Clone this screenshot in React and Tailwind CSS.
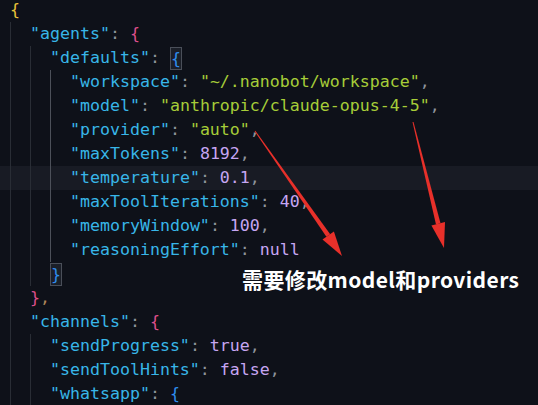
import React from "react";

const K = "text-[#38b6e8]";
const S = "text-[#a6cd38]";
const N = "text-[#c6a6f2]";
const P = "text-[#8f949c]";
const Y = "text-[#e9c23a]";
const PK = "text-[#de4f8c]";
const BL = "text-[#2f8ef0]";
const TAN = "text-[#b0865a]";

// each line: indent level, tokens [text, colour, matched bracket]
const LINES = [
  { ind: 0, t: [["{", Y]] },
  { ind: 1, t: [['"agents"', K], [": ", P], ["{", PK]] },
  { ind: 2, t: [['"defaults"', K], [": ", P], ["{", BL, true]] },
  { ind: 3, t: [['"workspace"', K], [": ", P], ['"~/.nanobot/workspace"', S], [",", P]] },
  { ind: 3, t: [['"model"', K], [": ", P], ['"anthropic/claude-opus-4-5"', S], [",", P]] },
  { ind: 3, t: [['"provider"', K], [": ", P], ['"auto"', S], [",", P]] },
  { ind: 3, t: [['"maxTokens"', K], [": ", P], ["8192", N], [",", P]] },
  { ind: 3, cur: true, t: [['"temperature"', K], [": ", P], ["0.1", N], [",", P]] },
  { ind: 3, t: [['"maxToolIterations"', K], [": ", P], ["40", N], [",", P]] },
  { ind: 3, t: [['"memoryWindow"', K], [": ", P], ["100", N], [",", P]] },
  { ind: 3, t: [['"reasoningEffort"', K], [": ", P], ["null", N]] },
  { ind: 2, t: [["}", BL, true]] },
  { ind: 1, t: [["}", PK], [",", TAN]] },
  { ind: 1, t: [['"channels"', K], [": ", P], ["{", PK]] },
  { ind: 2, t: [['"sendProgress"', K], [": ", P], ["true", N], [",", P]] },
  { ind: 2, t: [['"sendToolHints"', K], [": ", P], ["false", N], [",", P]] },
  { ind: 2, t: [['"whatsapp"', K], [": ", P], ["{", BL]] },
];

const Guide = ({ active }) => (
  <span
    className={`inline-block w-[20px] h-6 shrink-0 border-l ${
      active ? "border-[#4c5059]" : "border-[#292d35]"
    }`}
  />
);

const Line = ({ line }) => (
  <div
    className={`flex items-center h-6 pl-[10px] whitespace-pre ${
      line.cur ? "bg-[#181b24]" : ""
    }`}
  >
    {Array.from({ length: line.ind }).map((_, i) => (
      <Guide key={i} active={i === 2} />
    ))}
    {line.t.map(([text, color, boxed], i) =>
      boxed ? (
        <span
          key={i}
          className={`${color} inline-block h-[23px] leading-[21px] border border-[#4a4f59] bg-[#1b1f28]`}
        >
          {text}
        </span>
      ) : (
        <span key={i} className={color}>
          {text}
        </span>
      )
    )}
  </div>
);

const Arrows = () => (
  <svg
    className="absolute inset-0 pointer-events-none"
    width="538"
    height="405"
    viewBox="0 0 538 405"
  >
    <g fill="#e8302a">
      <polygon points="254.6,131.3 255.4,130.7 330.2,234.3 326.4,236.8" />
      <polygon points="342,256 322.5,239.4 333.9,231.4" />
      <polygon points="412.5,122.1 413.5,121.9 440.5,223.2 436,224.4" />
      <polygon points="444,248 431.4,225.4 445,222" />
    </g>
  </svg>
);

export default function App() {
  return (
    <div className="relative w-[538px] h-[405px] overflow-hidden bg-[#0e1119] font-['DejaVu_Sans_Mono',monospace] text-[16.6px] leading-6">
      <div className="-mt-0.5 flex flex-col">
        {LINES.map((line, i) => (
          <Line key={i} line={line} />
        ))}
      </div>
      <Arrows />
      <div className="absolute left-[242px] top-[267px] text-white font-bold text-[21px] tracking-[0.4px] leading-6 font-['Noto_Sans_CJK_SC','Noto_Sans',sans-serif]">
        需要修改model和providers
      </div>
    </div>
  );
}
